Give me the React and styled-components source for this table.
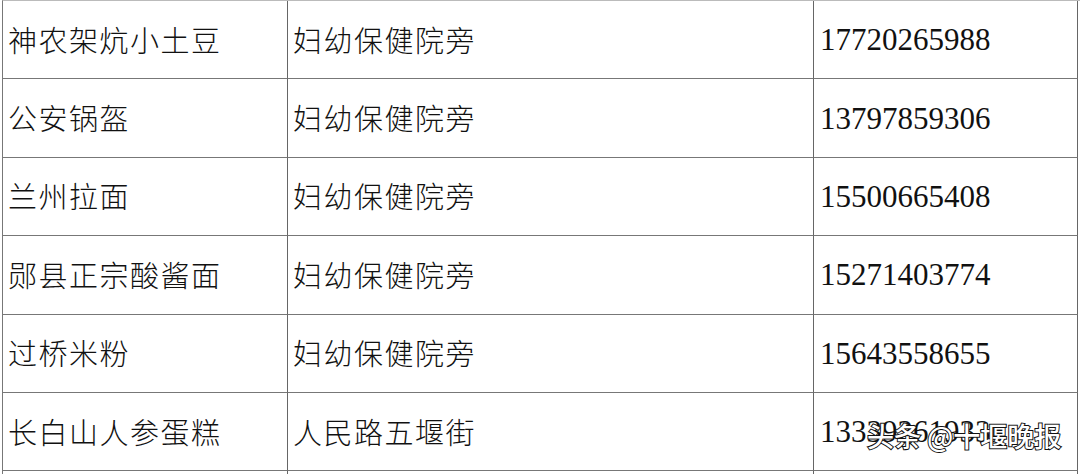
import React from 'react';
import styled, { createGlobalStyle } from 'styled-components';

const GlobalStyle = createGlobalStyle`
  html, body {
    margin: 0;
    padding: 0;
    background: #fff;
    overflow: hidden;
  }
`;

const Page = styled.div`
  position: relative;
  width: 1080px;
  height: 474px;
  overflow: hidden;
  background: #fff;
`;

const Table = styled.div`
  display: grid;
  grid-template-columns: 285px 526px 264px;
  grid-auto-rows: 78.4px;
  margin-left: 2px;
  border-left: 1px solid #777;
  border-top: 1px solid #bbb;
`;

const Cell = styled.div`
  display: flex;
  align-items: center;
  padding-left: ${(p) => (p.$num ? '6px' : '5px')};
  padding-top: ${(p) => (p.$num ? '3px' : '0')};
  padding-bottom: 2px;
  border-right: 1px solid #666;
  border-bottom: 1px solid #777;
  color: #111;
  font-family: ${(p) =>
    p.$num
      ? '"Liberation Serif", "DejaVu Serif", serif'
      : '"Noto Sans CJK SC", "Noto Sans", sans-serif'};
  font-size: ${(p) => (p.$num ? '31px' : '29px')};
  font-weight: ${(p) => (p.$num ? 400 : 300)};
  letter-spacing: ${(p) => (p.$num ? '0' : '1.5px')};
  white-space: nowrap;
  overflow: hidden;
`;

const Watermark = styled.div`
  position: absolute;
  left: 867px;
  top: 418px;
  font-family: "Noto Sans CJK SC", sans-serif;
  font-size: 27px;
  line-height: 36px;
  font-weight: 500;
  color: #fff;
  white-space: nowrap;
  -webkit-text-stroke: 2px #111;
  paint-order: stroke fill;
`;

const rows = [
  ['神农架炕小土豆', '妇幼保健院旁', '17720265988'],
  ['公安锅盔', '妇幼保健院旁', '13797859306'],
  ['兰州拉面', '妇幼保健院旁', '15500665408'],
  ['郧县正宗酸酱面', '妇幼保健院旁', '15271403774'],
  ['过桥米粉', '妇幼保健院旁', '15643558655'],
  ['长白山人参蛋糕', '人民路五堰街', '13339261933'],
  ['', '', ''],
];

export default function App() {
  return (
    <Page>
      <GlobalStyle />
      <Table>
        {rows.map((r, i) => (
          <React.Fragment key={i}>
            <Cell>{r[0]}</Cell>
            <Cell>{r[1]}</Cell>
            <Cell $num>{r[2]}</Cell>
          </React.Fragment>
        ))}
      </Table>
      <Watermark>头条 @十堰晚报</Watermark>
    </Page>
  );
}
